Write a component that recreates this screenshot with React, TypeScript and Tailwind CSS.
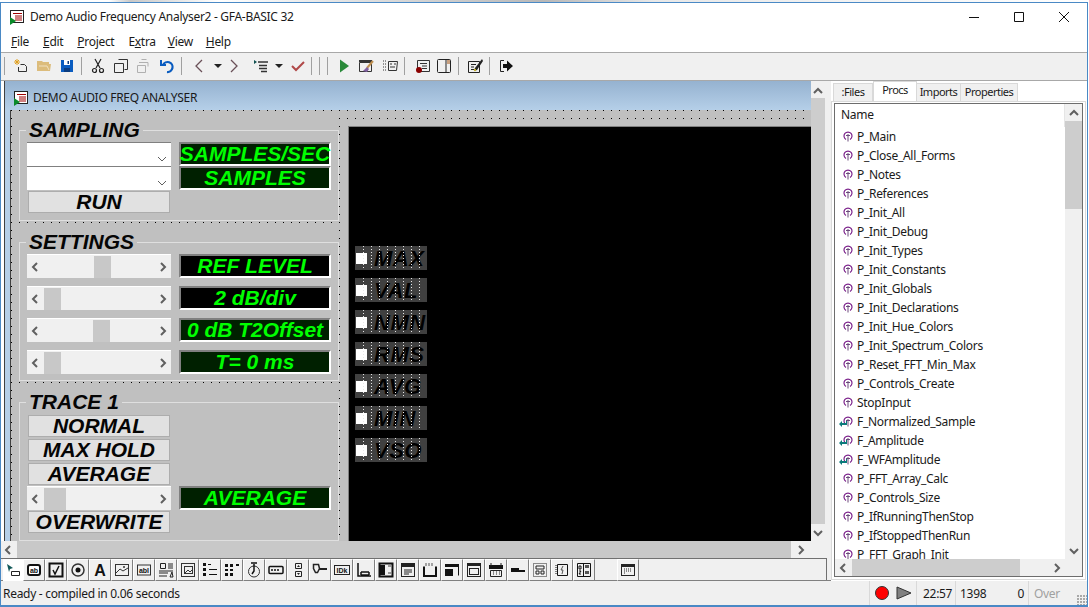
import type { ReactNode } from "react";

const ui = "font-['Noto_Sans',sans-serif] tracking-[-0.3px]";
const arial = "font-['Liberation_Sans',Arial,sans-serif] font-bold italic";

const procs = [
  "P_Main", "P_Close_All_Forms", "P_Notes", "P_References", "P_Init_All", "P_Init_Debug", "P_Init_Types",
  "P_Init_Constants", "P_Init_Globals", "P_Init_Declarations", "P_Init_Hue_Colors", "P_Init_Spectrum_Colors",
  "P_Reset_FFT_Min_Max", "P_Controls_Create", "StopInput", "F_Normalized_Sample", "F_Amplitude", "F_WFAmplitude",
  "P_FFT_Array_Calc", "P_Controls_Size", "P_IfRunningThenStop", "P_IfStoppedThenRun", "P_FFT_Graph_Init",
];

function Ico({ children, className = "ml-[7px]" }: { children: ReactNode; className?: string }) {
  return (
    <svg viewBox="0 0 16 16" fill="none" className={`w-4 h-4 shrink-0 ${className}`}>
      {children}
    </svg>
  );
}

function Sep({ className }: { className: string }) {
  return <div className={`w-px h-[18px] bg-[#a0a0a0] shrink-0 ${className}`} />;
}

function Drop({ className }: { className: string }) {
  return (
    <svg viewBox="0 0 8 4" className={`w-2 h-1 shrink-0 ${className}`}>
      <path d="M0 0h8L4 4z" fill="#222" />
    </svg>
  );
}

function AppIcon() {
  return (
    <svg viewBox="0 0 16 16" className="w-4 h-4 shrink-0">
      <rect x="1.5" y="1.5" width="13" height="12" fill="#fff" stroke="#222" />
      <path d="M4 4.500h9M6 7h7M6 9h7M6 11h7" stroke="#a00000" />
      <path d="M1 8l6 4-6 4z" fill="#0a8a2a" />
    </svg>
  );
}

function Chev({ dir, className = "" }: { dir: "l" | "r" | "u" | "d"; className?: string }) {
  const d = { l: "M7 2L3 6l4 4", r: "M4 2l4 4-4 4", u: "M2 8l4-4 4 4", d: "M2 4l4 4 4-4" }[dir];
  return (
    <svg viewBox="0 0 12 12" className={`w-3 h-3 shrink-0 ${className}`}>
      <path d={d} fill="none" stroke="#606060" strokeWidth="2" />
    </svg>
  );
}

function Toolbar() {
  return (
    <div className="flex items-center h-[28px] pl-[3px] pb-[2px] bg-[#f0f0f0] border-t border-[#a8a8a8]">
      <Sep className="" />
      <Ico className="ml-[8px]">
        <path d="M7.500 6.500h4l2 2v5h-8V9" stroke="#333" />
        <path d="M4 1v6M1 4h6M2 2l4 4M6 2L2 6" stroke="#e0a020" />
      </Ico>
      <Ico>
        <path d="M1 3h5l1 1h6v2H1zM1 6h14l-1 7H1z" fill="#dcbc7c" />
        <path d="M3 8h8l2 4" stroke="#f0e0c0" />
      </Ico>
      <Ico>
        <path d="M2 2h12v12H2z" fill="#0a5cc0" />
        <path d="M5 2h6v5H5z" fill="#fff" />
        <path d="M8.500 3h1.500v3H8.500zM5 10h6v4H5z" fill="#0a3c80" />
      </Ico>
      <Sep className="ml-[6px]" />
      <Ico className="ml-[8px]">
        <path d="M5 1l5 9M11 1L6 10" stroke="#222" strokeWidth="1.200" />
        <circle cx="4.500" cy="12.500" r="2" stroke="#222" strokeWidth="1.200" />
        <circle cx="11.500" cy="12.500" r="2" stroke="#222" strokeWidth="1.200" />
      </Ico>
      <Ico>
        <path d="M5.500 1.500h9v10h-3M1.500 5.500h9v9h-9z" stroke="#333" />
      </Ico>
      <Ico>
        <path d="M5.500 1.500h5M3 4.500h9v4M1.500 7.500h8v7h-8z" stroke="#b0b0b0" />
      </Ico>
      <Ico>
        <path d="M4 7a5 5 0 1 1 4 7" stroke="#0a5cc0" strokeWidth="2.200" />
        <path d="M1 2h2v4h4v2H1z" fill="#0a5cc0" />
      </Ico>
      <Sep className="ml-[6px]" />
      <Ico className="ml-[9px]">
        <path d="M11 2L5 8l6 6" stroke="#6a5058" strokeWidth="1.300" />
      </Ico>
      <Drop className="ml-[7px]" />
      <Ico className="ml-[4px]">
        <path d="M5 2l6 6-6 6" stroke="#6a5058" strokeWidth="1.300" />
      </Ico>
      <Ico className="ml-[11px]">
        <path d="M1 2l3 2-3 2z" fill="#105050" />
        <path d="M5 4h10M6 7.500h8M6 10.500h8M8 13.500h6" stroke="#333" strokeWidth="1.300" />
      </Ico>
      <Drop className="ml-[6px]" />
      <Ico>
        <path d="M2 8l4 4 8-8" stroke="#b04848" strokeWidth="2" />
      </Ico>
      <Sep className="ml-[5px]" />
      <Sep className="ml-[7px]" />
      <Sep className="ml-[7px]" />
      <Ico className="ml-[8px]">
        <path d="M4 1.500l9 6.500-9 6.500z" fill="#2a8a3a" />
      </Ico>
      <Ico className="ml-[6px]">
        <path d="M1.500 4.500h12v9h-12z" stroke="#333" />
        <path d="M1 2h13v2H1z" fill="#333" />
        <path d="M15 3l-6 7" stroke="#c09050" strokeWidth="2" />
        <path d="M5 13l4-4 2 2-2 3z" fill="#8060a0" />
      </Ico>
      <Ico className="ml-[8px]">
        <path d="M1 3h1M3 3h1M1 6h1M3 6h1M1 9h1M3 9h1M1 12h1M3 12h1" stroke="#333" />
        <path d="M6.500 3.500h9l-1 9h-8z" stroke="#333" />
        <path d="M8 6h2M12 6h2M8 9h5" stroke="#333" />
      </Ico>
      <Sep className="ml-[6px]" />
      <Ico className="ml-[10px]">
        <path d="M2.500 2.500h12v11h-12z" stroke="#333" />
        <path d="M5 5.500h7M7 8h5M7 10.500h5" stroke="#333" />
        <circle cx="4" cy="12" r="3" fill="#8a0000" />
      </Ico>
      <Ico className="ml-[5px]">
        <rect x="1.500" y="1.500" width="13" height="13" rx="1" stroke="#222" />
        <path d="M10 1.500v13" stroke="#222" />
        <path d="M11 2h3v4h-3z" fill="#c8a080" />
      </Ico>
      <Sep className="ml-[6px]" />
      <Ico className="ml-[8px]">
        <path d="M1.500 3.500h11v11h-11z" stroke="#222" />
        <path d="M4 6.500h5M4 9h3M4 11.500h3" stroke="#222" />
        <path d="M15 1L8 10l-1 3 3-1 6-9z" fill="#222" />
        <circle cx="8" cy="12" r="1.200" fill="#c0b030" />
      </Ico>
      <Sep className="ml-[6px]" />
      <Ico className="ml-[8px]">
        <path d="M6 2.500H2.500v11H6" stroke="#222" />
        <path d="M5 6h4V2.500L15 8l-6 5.500V10H5z" fill="#111" />
      </Ico>
    </div>
  );
}

function GreenLabel({ text, dark = false }: { text: string; dark?: boolean }) {
  return (
    <div
      className={`h-[24px] w-[152px] flex items-center justify-center whitespace-nowrap border-2 border-t-[#808080] border-l-[#808080] border-r-white border-b-white text-[#00ff00] text-[21px] ${arial} ${
        dark ? "bg-black" : "bg-[#002000]"
      }`}
    >
      {text}
    </div>
  );
}

function Slider({ thumb }: { thumb: string }) {
  return (
    <div className="h-[24px] w-[144px] flex items-center bg-[#f0f0f0] border-t border-white">
      <div className="w-[17px] flex justify-center shrink-0">
        <Chev dir="l" />
      </div>
      <div className={`h-[22px] bg-[#c8c8c8] shrink-0 ${thumb}`} />
      <div className="w-[17px] flex justify-center shrink-0 ml-auto">
        <Chev dir="r" />
      </div>
    </div>
  );
}

function FormButton({ text }: { text: string }) {
  return (
    <div className={`mx-px h-[22px] w-[142px] flex items-center justify-center bg-[#e1e1e1] border border-[#adadad] text-[21px] text-[#050505] ${arial}`}>
      {text}
    </div>
  );
}

function Combo() {
  return (
    <div className="h-[24px] w-[144px] bg-white border-t border-[#808080] flex items-end justify-end pr-[3px] pb-[1px]">
      <svg viewBox="0 0 12 12" className="w-3 h-3">
        <path d="M2 4l4 4 4-4" fill="none" stroke="#606060" />
      </svg>
    </div>
  );
}

function Group({ title, boxH, frameH, children }: { title: string; boxH: string; frameH: string; children: ReactNode }) {
  return (
    <div className={`bg-[#c0c0c0] pl-[7px] pt-[19px] ${boxH}`}>
      <div className={`w-[320px] border border-[#dfdfdf] ${frameH}`}>
        <div className={`w-fit h-[24px] -mt-[13px] ml-[6px] px-[3px] bg-[#c0c0c0] text-[21px] leading-[24px] text-[#050505] ${arial}`}>{title}</div>
        <div className="pl-[7px] w-full">{children}</div>
      </div>
    </div>
  );
}

function MeterRow({ text }: { text: string }) {
  return (
    <div className={`relative w-[72px] h-[24px] bg-[#404040] flex items-center pl-px text-[22px] text-black ${arial}`}>
      <div className="w-[11px] h-[11px] bg-white shrink-0" />
      <div className="ml-[7px] tracking-[0.5px]">{text}</div>
      <div className="absolute top-0 bottom-0 left-[8px] right-0 bg-[radial-gradient(circle_at_0.5px_0.5px,#e8e8e8_0.6px,transparent_0.6px)] bg-[size:8px_3px]" />
    </div>
  );
}

function FormWindow() {
  return (
    <div className="flex h-[460px]">
      <div className="w-[3px] bg-white shrink-0" />
      <div className="w-[807px] shrink-0 flex flex-col border-l border-[#404040] bg-[#b5cfe8]">
        <div className={`h-[29px] flex items-center pl-[8px] pt-[5px] text-[12px] text-[#1a1a1a] bg-[linear-gradient(#95b2d0,#b5cfe8)] ${ui}`}>
          <AppIcon />
          <span className="ml-[4px]">DEMO AUDIO FREQ ANALYSER</span>
        </div>
        <div className="flex-1 ml-[5px] flex border-l border-[#404040] min-h-0 pt-px bg-[#c0c0c0] bg-[radial-gradient(circle_at_0.5px_0.5px,#000_0.6px,transparent_0.6px)] bg-[size:8px_8px]">
          <div className="ml-px w-[327px] flex flex-col gap-px shrink-0">
            <Group title="SAMPLING" boxH="h-[111px]" frameH="h-[91px]">
              <div className="flex gap-[8px]">
                <div className="flex flex-col">
                  <Combo />
                  <Combo />
                  <div className="mt-px">
                    <FormButton text="RUN" />
                  </div>
                </div>
                <div className="flex flex-col">
                  <GreenLabel text="SAMPLES/SEC" />
                  <GreenLabel text="SAMPLES" />
                </div>
              </div>
            </Group>
            <Group title="SETTINGS" boxH="h-[159px]" frameH="h-[139px]">
              <div className="flex flex-col gap-[8px]">
                <div className="flex gap-[8px]">
                  <Slider thumb="ml-[50px] w-[17px]" />
                  <GreenLabel text="REF LEVEL" dark />
                </div>
                <div className="flex gap-[8px]">
                  <Slider thumb="w-[17px]" />
                  <GreenLabel text="2 dB/div" dark />
                </div>
                <div className="flex gap-[8px]">
                  <Slider thumb="ml-[49px] w-[17px]" />
                  <GreenLabel text="0 dB T2Offset" />
                </div>
                <div className="flex gap-[8px]">
                  <Slider thumb="w-[17px]" />
                  <GreenLabel text="T= 0 ms" />
                </div>
              </div>
            </Group>
            <Group title="TRACE 1" boxH="h-[158px]" frameH="h-[139px]">
              <div className="flex flex-col mt-px">
                <FormButton text="NORMAL" />
                <div className="mt-[2px]">
                  <FormButton text="MAX HOLD" />
                </div>
                <div className="mt-[2px]">
                  <FormButton text="AVERAGE" />
                </div>
                <div className="flex gap-[8px] mt-px">
                  <Slider thumb="w-[22px]" />
                  <GreenLabel text="AVERAGE" />
                </div>
                <div className="mt-px">
                  <FormButton text="OVERWRITE" />
                </div>
              </div>
            </Group>
          </div>
          <div className="ml-px mt-[8px] flex-1 bg-[#c0c0c0] pl-[8px] pt-[7px]">
            <div className="h-full bg-black border-t border-l border-[#808080] pl-[6px] pt-[119px] flex flex-col gap-[8px]">
              {["MAX", "VAL", "NMN", "RMS", "AVG", "MIN", "VSO"].map((m) => (
                <MeterRow key={m} text={m} />
              ))}
            </div>
          </div>
        </div>
      </div>
      <div className="flex-1 bg-[#f0f0f0] flex flex-col">
        <div className="w-[14px] h-[15px] flex items-center justify-center mt-[2px]">
          <Chev dir="u" />
        </div>
        <div className="w-[14px] h-[426px] bg-[#cdcdcd]" />
        <div className="w-[14px] h-[16px] flex items-center justify-center mt-px">
          <Chev dir="d" />
        </div>
      </div>
    </div>
  );
}

const lbl = { fontFamily: "'Liberation Sans', Arial, sans-serif", fontWeight: 700 };

const tools: ReactNode[] = [
  <>
    <rect x="1" y="2" width="14" height="12" rx="3" fill="#111" />
    <rect x="3" y="4" width="10" height="8" rx="1" fill="#fff" />
    <text x="8" y="11" textAnchor="middle" fontSize="7" fill="#111" style={lbl}>ab</text>
  </>,
  <>
    <rect x="1.500" y="1.500" width="13" height="13" stroke="#111" strokeWidth="2" />
    <path d="M5 8l2 4 4-8" stroke="#111" strokeWidth="1.500" />
  </>,
  <>
    <circle cx="8" cy="8" r="6" stroke="#333" strokeWidth="1.500" />
    <circle cx="8" cy="8" r="2.500" fill="#111" />
  </>,
  <text x="8" y="14" textAnchor="middle" fontSize="16" fill="#111" style={lbl}>A</text>,
  <>
    <rect x="1.500" y="2.500" width="13" height="11" stroke="#333" />
    <path d="M2 11l4-4 3 2 5-3" stroke="#333" />
    <circle cx="10" cy="5" r="1" fill="#333" />
  </>,
  <>
    <rect x="1.500" y="3" width="13" height="10" stroke="#333" />
    <text x="8" y="11" textAnchor="middle" fontSize="7" fill="#111" style={lbl}>abl</text>
  </>,
  <>
    <path d="M2.500 1.500h5v5h-5zM10 2h5M10 4h5M10 6h5M1 9h14M1 11h9M1 14h8" stroke="#222" />
    <path d="M14 10l-2 5h3z" stroke="#222" />
  </>,
  <>
    <rect x="1.500" y="1.500" width="13" height="13" stroke="#333" />
    <rect x="4.500" y="4.500" width="8" height="7" stroke="#333" />
    <path d="M5 11l3-3 2 2 2-2" stroke="#333" />
  </>,
  <path d="M1 1h3v3H1zM7 7h8v1H7zM1 6h3v3H1zM7 12h8v1H7zM1 11h3v3H1zM6 2h3v1H6z" fill="#111" />,
  <path d="M1 2h3v3H1zM6 2h3v3H6zM12 2h3v2h-3zM1 7h3v2H1zM6 7h3v2H6zM1 11h3v3H1zM6 11h3v3H6z" fill="#111" />,
  <>
    <circle cx="8" cy="9.500" r="5.500" stroke="#333" />
    <path d="M8 2v7l-2 3M5 1h6" stroke="#111" strokeWidth="1.500" />
  </>,
  <>
    <rect x="1" y="4.500" width="14" height="7" rx="1" stroke="#111" strokeWidth="1.500" />
    <path d="M4 7v2M7 7v2M10 7v2" stroke="#111" strokeWidth="1.500" />
  </>,
  <>
    <path d="M5.500 1.500h6v5h-6zM5.500 9.500h6v5h-6z" stroke="#222" />
    <path d="M7 5l1.500-2L10 5zM7 11l1.500 2 1.500-2z" fill="#222" />
  </>,
  <>
    <path d="M1.500 2.500h5l1 4-2 4h-2l-2-4z" stroke="#222" strokeWidth="1.500" />
    <path d="M7 7h8" stroke="#222" strokeWidth="2" />
  </>,
  <>
    <rect x="0.500" y="3.500" width="15" height="9" stroke="#222" />
    <text x="8" y="11" textAnchor="middle" fontSize="7" fill="#111" style={lbl}>IDk</text>
  </>,
  <path d="M2 1v13h13M5 10h8M5 13h8M5 10v3M13 10v3" stroke="#111" strokeWidth="1.500" />,
  <>
    <rect x="1.500" y="1.500" width="13" height="13" stroke="#111" strokeWidth="2" />
    <path d="M2 3h5v10H2z" fill="#111" />
    <path d="M10 3h3v2h-3zM10 10h3v2h-3z" fill="#999" />
  </>,
  <>
    <rect x="1.500" y="1.500" width="13" height="13" stroke="#222" />
    <path d="M2 2h12v3H2z" fill="#222" />
    <path d="M4 8h8M4 10h8M4 12h5" stroke="#222" />
  </>,
  <>
    <path d="M2 4.500v9.500h12V4.500" stroke="#111" strokeWidth="2" />
    <path d="M4 1v3M7 1v3M10 1v3" stroke="#555" />
  </>,
  <>
    <path d="M1.500 2.500h13v11" stroke="#111" />
    <path d="M1 2h14v3H1zM1 7h8v7H1z" fill="#111" />
  </>,
  <>
    <rect x="1.500" y="1.500" width="13" height="13" stroke="#222" />
    <path d="M2 2h12v2H2z" fill="#222" />
    <rect x="3.500" y="6.500" width="9" height="6" stroke="#222" />
  </>,
  <>
    <path d="M1 3h14v4H1z" fill="#111" />
    <path d="M3 1v3M13 1v3M2.500 8.500h11v6h-11zM5 10h1M8 10h1M11 10h1M5 12h1M8 12h1M11 12h1" stroke="#222" />
  </>,
  <path d="M1 6h8v4H1zM9 8h6v2H9z" fill="#111" />,
  <>
    <path d="M1.500 1.500h13v13h-13z" stroke="#222" strokeDasharray="1 1" />
    <path d="M4 4h8v3H4zM4 9h3v3H4zM9 9h3v3H9z" stroke="#222" />
  </>,
  <>
    <path d="M3.500 2.500h10v11h-10z" stroke="#111" />
    <path d="M2 3v10" stroke="#111" strokeDasharray="1 1" />
    <path d="M9 4L7 8h2l-1 4" stroke="#555" />
  </>,
  <>
    <path d="M1.500 1.500h13v13h-13zM7.500 1.500v13" stroke="#111" />
    <path d="M3 4h2v3H3zM3 9h2l-2 3h2" stroke="#111" />
    <path d="M9 3h4v3H9zM9 9h4v3H9z" fill="#555" />
  </>,
];

function ToolBtn({ children, className = "" }: { children: ReactNode; className?: string }) {
  return (
    <div className={`w-[22px] h-[22px] shrink-0 flex items-center justify-center bg-[#f0f0f0] border border-t-white border-l-white border-r-[#808080] border-b-[#808080] ${className}`}>
      <svg viewBox="0 0 16 16" fill="none" className="w-4 h-4">
        {children}
      </svg>
    </div>
  );
}

function Toolbox() {
  return (
    <div className="flex h-[23px] bg-[#f0f0f0] border-b border-[#808080]">
      <div className="w-[826px] flex items-start pl-[2px] border-t border-r border-[#707070] shrink-0">
        <div className="w-[20px] h-[22px] shrink-0 flex items-center justify-center bg-white">
          <svg viewBox="0 0 16 16" fill="none" className="w-4 h-4">
            <path d="M2 2l6 4-3 1-1 3z" fill="#105858" />
            <path d="M6.500 9.500h8v4h-8z" stroke="#222" />
          </svg>
        </div>
        {tools.map((t, i) => (
          <ToolBtn key={i}>{t}</ToolBtn>
        ))}
        <ToolBtn className="ml-[22px]">
          <rect x="1.500" y="2.500" width="13" height="11" stroke="#222" />
          <path d="M2 3h12v2H2z" fill="#222" />
          <path d="M4 7h8M4 9h8M4 11h1" stroke="#222" strokeDasharray="1 1" />
        </ToolBtn>
      </div>
    </div>
  );
}

function ProcIcon({ fn }: { fn: boolean }) {
  return (
    <div className="relative w-[10px] h-[11px] ml-[8px] mr-[4px] shrink-0">
      <svg viewBox="0 0 10 11" fill="none" className="w-[10px] h-[11px]">
        <path d="M3 8.500A4 4 0 1 1 7 8.500" stroke="#7a1f8a" strokeWidth="1.200" />
        <path d="M5 3v7.500M3 4.500h4" stroke="#6a4a7a" />
      </svg>
      {fn && (
        <svg viewBox="0 0 8 8" className="absolute -left-[4px] top-[4px] w-2 h-2">
          <path d="M3 1L0 4l3 3zM3 3h4v-2h1v4H3z" fill="#0a7a7a" />
        </svg>
      )}
    </div>
  );
}

function ProcPanel() {
  return (
    <div className={`w-[256px] shrink-0 flex flex-col h-[500px] text-[12px] text-[#1a1a1a] ${ui}`}>
      <div className="h-[20px] flex items-end pl-[2px] shrink-0 text-[11px] tracking-[-0.5px]">
        <div className="w-[40px] h-[18px] bg-[#f0f0f0] border border-b-0 border-[#d9d9d9] flex items-center justify-center pb-px">:Files</div>
        <div className="w-[44px] h-[20px] bg-white border border-b-0 border-[#d9d9d9] flex items-center justify-center pb-[3px]">Procs</div>
        <div className="w-[44px] h-[18px] bg-[#f0f0f0] border border-b-0 border-l-0 border-[#d9d9d9] flex items-center justify-center pb-px">Imports</div>
        <div className="w-[57px] h-[18px] bg-[#f0f0f0] border border-b-0 border-l-0 border-[#d9d9d9] flex items-center justify-center pb-px">Properties</div>
      </div>
      <div className="h-[479px] w-[255px] border border-[#d9d9d9] px-[2px] pt-px pb-[2px] bg-white shrink-0">
        <div className="h-full border border-[#6d6d6d] flex flex-col">
          <div className="flex flex-1 min-h-0">
            <div className="flex-1 min-w-0 overflow-hidden">
              <div className="h-[23px] flex items-center pl-[6px] pb-px border-r border-[#e5e5e5]">Name</div>
              {procs.map((p) => (
                <div key={p} className="h-[19px] flex items-center whitespace-nowrap">
                  <ProcIcon fn={p.startsWith("F_")} />
                  <span>{p}</span>
                </div>
              ))}
            </div>
            <div className="w-[17px] bg-[#f0f0f0] flex flex-col shrink-0">
              <div className="h-[17px] flex items-center justify-center">
                <Chev dir="u" />
              </div>
              <div className="h-[88px] bg-[#cdcdcd]" />
              <div className="flex-1" />
              <div className="h-[17px] flex items-center justify-center">
                <Chev dir="d" />
              </div>
            </div>
          </div>
          <div className="h-[17px] bg-[#f0f0f0] flex items-center shrink-0">
            <div className="w-[17px] flex justify-center">
              <Chev dir="l" />
            </div>
            <div className="w-[168px] h-full bg-[#cdcdcd]" />
            <div className="w-[17px] flex justify-center ml-[28px]">
              <Chev dir="r" />
            </div>
          </div>
        </div>
      </div>
    </div>
  );
}

function StatusBar() {
  return (
    <div className={`flex h-[24px] bg-[#f0f0f0] text-[12px] text-[#1a1a1a] ${ui}`}>
      <div className="flex-1 pl-[2px] pt-[2px] flex items-center">Ready - compiled in 0.06 seconds</div>
      <div className="w-[47px] border-l border-[#d9d9d9] flex items-center pl-[5px] gap-[7px]">
        <div className="w-[14px] h-[14px] rounded-full bg-[#ff0000] border border-[#333] shrink-0" />
        <svg viewBox="0 0 16 14" className="w-4 h-[14px] shrink-0">
          <path d="M1 1l14 6-14 6z" fill="#808080" stroke="#333" />
        </svg>
      </div>
      <div className="w-[39px] border-l border-[#d9d9d9] pt-[2px] flex items-center pl-[6px]">22:57</div>
      <div className="w-[73px] border-l border-[#d9d9d9] pt-[2px] flex items-center justify-between px-[4px]">
        <span>1398</span>
        <span>0</span>
      </div>
      <div className="w-[59px] border-l border-[#d9d9d9] pt-px flex items-center pl-[5px] text-[#a0a0a0] relative">
        Over
        <div className="absolute right-0 bottom-0 w-[10px] h-[10px] bg-[radial-gradient(circle_at_1px_1px,#a8a8a8_1px,transparent_1px)] bg-[size:3px_3px]" />
      </div>
    </div>
  );
}

export default function App() {
  return (
    <div className="w-[1089px] h-[607px] overflow-hidden bg-white">
      <div className="h-[2px] bg-[linear-gradient(90deg,#fff_10%,#c8c8c8_12%,#fff_20%,#b8b8b8_50%,#e8e8e8_60%,#fff)]" />
      <div className="w-[1088px] h-[605px] flex flex-col bg-white border-l border-r border-t border-[#4a89c5] border-b-2">
        <div className={`h-[30px] flex items-center pl-[8px] pb-[2px] text-[12px] text-[#1a1a1a] shrink-0 ${ui}`}>
          <AppIcon />
          <span className="ml-[5px]">Demo Audio Frequency Analyser2 - GFA-BASIC 32</span>
          <div className="ml-auto flex items-center gap-[35px] pr-[18px]">
            <svg viewBox="0 0 10 10" className="w-[10px] h-[10px]">
              <path d="M0 5.500h10" stroke="#111" />
            </svg>
            <svg viewBox="0 0 10 10" className="w-[10px] h-[10px]">
              <path d="M.5.500h9v9h-9z" fill="none" stroke="#111" />
            </svg>
            <svg viewBox="0 0 10 10" className="w-[10px] h-[10px]">
              <path d="M0 0l10 10M10 0L0 10" stroke="#111" />
            </svg>
          </div>
        </div>
        <div className={`h-[19px] flex items-center gap-[14px] pl-[10px] pb-[2px] text-[12px] text-[#1a1a1a] shrink-0 ${ui}`}>
          <span><u>F</u>ile</span>
          <span><u>E</u>dit</span>
          <span><u>P</u>roject</span>
          <span>E<u>x</u>tra</span>
          <span className="-ml-[2px]"><u>V</u>iew</span>
          <span className="-ml-px"><u>H</u>elp</span>
        </div>
        <Toolbar />
        <div className="flex flex-1 min-h-0 border-t border-[#a8a8a8]">
          <div className="w-[830px] shrink-0 flex flex-col">
            <FormWindow />
            <div className="h-[17px] flex items-center bg-[#f0f0f0]">
              <div className="w-[16px] flex justify-center shrink-0">
                <Chev dir="l" />
              </div>
              <div className="w-[774px] h-full bg-[#c8c8c8] shrink-0" />
              <div className="w-[20px] flex justify-center shrink-0">
                <Chev dir="r" />
              </div>
            </div>
            <Toolbox />
          </div>
          <ProcPanel />
        </div>
        <StatusBar />
      </div>
    </div>
  );
}
